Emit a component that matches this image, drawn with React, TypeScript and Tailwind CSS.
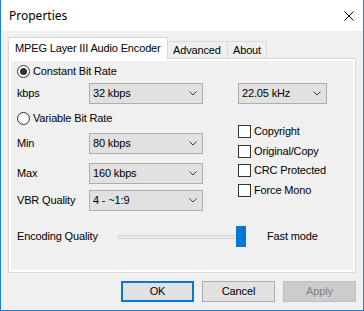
import React from "react";

function Chevron() {
  return (
    <svg width="8" height="5" viewBox="0 0 8 5" className="shrink-0">
      <path d="M0.5 0.5 L4 4 L7.5 0.5" fill="none" stroke="#3c3c3c" strokeWidth="1" />
    </svg>
  );
}

function Combo({ text, w }: { text: string; w: string }) {
  return (
    <div className={`${w} h-[21px] border border-[#adadad] bg-[#e1e1e1] flex items-center justify-between pl-[3px] pr-[5px]`}>
      <span className="leading-[13px]">{text}</span>
      <Chevron />
    </div>
  );
}

function Radio({ checked, label }: { checked?: boolean; label: string }) {
  return (
    <div className="flex items-center h-[13px] gap-[3px]">
      <div className="w-[13px] h-[13px] rounded-full border border-[#333333] bg-white flex items-center justify-center">
        {checked && <div className="w-[7px] h-[7px] rounded-full bg-[#333333]" />}
      </div>
      <span className="leading-[13px]">{label}</span>
    </div>
  );
}

function Check({ label, className }: { label: string; className?: string }) {
  return (
    <div className={`flex items-center h-[13px] gap-[3px] ${className ?? ""}`}>
      <div className="w-[13px] h-[13px] border border-[#333333] bg-white" />
      <span className="leading-[13px]">{label}</span>
    </div>
  );
}

function Row({ label, combo, className }: { label: string; combo: string; className?: string }) {
  return (
    <div className={`flex items-center ${className ?? ""}`}>
      <span className="w-[72px] leading-[13px]">{label}</span>
      <Combo text={combo} w="w-[114px]" />
    </div>
  );
}

export default function App() {
  return (
    <div className="w-[364px] h-[311px] bg-[#f0f0f0] border-x border-b border-[#1883d7] flex flex-col text-[11px] tracking-[-0.15px] text-black font-['Liberation_Sans',Arial,sans-serif]">
      {/* Title bar */}
      <div className="h-[31px] bg-white flex items-center justify-between pl-[8px] pr-[9px] shrink-0">
        <span className="text-[12px] tracking-normal font-['Noto_Sans',sans-serif] text-black">Properties</span>
        <svg width="10" height="10" viewBox="0 0 10 10">
          <path d="M0.5 0.5 L9.5 9.5 M9.5 0.5 L0.5 9.5" stroke="#000" strokeWidth="1" />
        </svg>
      </div>

      <div className="px-[7px] flex flex-col">
        {/* Tabs */}
        <div className="mt-[6px] h-[21px] flex items-end">
          <div className="relative z-10 h-[22px] -mb-px w-[160px] bg-white border border-b-0 border-[#d9d9d9] flex items-center pl-[6px]">
            <span className="leading-[13px]">MPEG Layer III Audio Encoder</span>
          </div>
          <div className="h-[17px] w-[60px] border-t border-r border-[#d9d9d9] bg-[#f0f0f0] flex items-center pl-[5px]">
            <span className="leading-[13px]">Advanced</span>
          </div>
          <div className="h-[17px] w-[39px] border-t border-r border-[#d9d9d9] bg-[#f0f0f0] flex items-center pl-[5px]">
            <span className="leading-[13px]">About</span>
          </div>
        </div>

        {/* Panel */}
        <div className="h-[215px] border border-[#d9d9d9] bg-white p-[2px] flex">
          <div className="flex-1 bg-[#f0f0f0] pt-[4px] pl-[6px] flex flex-col">
            <div className="flex">
              {/* Left column */}
              <div className="w-[186px] flex flex-col">
                <Radio checked label="Constant Bit Rate" />
                <Row label="kbps" combo="32 kbps" className="mt-[5px]" />
                <div className="mt-[8px]">
                  <Radio label="Variable Bit Rate" />
                </div>
                <Row label="Min" combo="80 kbps" className="mt-[8px]" />
                <Row label="Max" combo="160 kbps" className="mt-[9px]" />
                <Row label="VBR Quality" combo="4 - ~1:9" className="mt-[6px]" />
              </div>
              {/* Right column */}
              <div className="ml-[35px] flex flex-col">
                <div className="mt-[18px]">
                  <Combo text="22.05 kHz" w="w-[89px]" />
                </div>
                <Check label="Copyright" className="mt-[21px]" />
                <Check label="Original/Copy" className="mt-[7px]" />
                <Check label="CRC Protected" className="mt-[6px]" />
                <Check label="Force Mono" className="mt-[7px]" />
              </div>
            </div>

            {/* Encoding quality */}
            <div className="mt-[15px] h-[21px] flex items-center">
              <span className="w-[101px] leading-[13px]">Encoding Quality</span>
              <div className="relative w-[128px] h-[21px]">
                <div className="absolute left-0 right-0 top-[9px] h-[4px] bg-[#e7eaea] border border-[#d6d6d6]" />
                <div className="absolute right-0 top-0 w-[10px] h-[21px] bg-[#0078d7]" />
              </div>
              <span className="ml-[21px] leading-[13px]">Fast mode</span>
            </div>
          </div>
        </div>

        {/* Buttons */}
        <div className="mt-[8px] flex justify-end gap-[8px]">
          <div className="w-[73px] h-[21px] border-2 border-[#0078d7] bg-[#e1e1e1] flex items-center justify-center">
            <span className="leading-[13px]">OK</span>
          </div>
          <div className="w-[73px] h-[21px] border border-[#adadad] bg-[#e1e1e1] flex items-center justify-center">
            <span className="leading-[13px]">Cancel</span>
          </div>
          <div className="w-[73px] h-[21px] border border-[#bfbfbf] bg-[#cccccc] flex items-center justify-center text-[#838383]">
            <span className="leading-[13px]">Apply</span>
          </div>
        </div>
      </div>
    </div>
  );
}
